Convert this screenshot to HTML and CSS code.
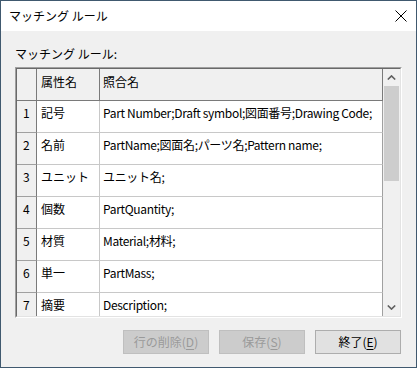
FILE: index.html
```html
<!DOCTYPE html>
<html lang="ja">
<head>
<meta charset="utf-8">
<title>マッチング ルール</title>
<link rel="stylesheet" href="styles.css">
</head>
<body>
<div class="window">
  <div class="titlebar">
    <span class="title">マッチング ルール</span>
    <svg class="close" width="12" height="12" viewBox="0 0 12 12"><path d="M0.5 0.5L11.5 11.5M11.5 0.5L0.5 11.5" stroke="#000" stroke-width="1" fill="none"/></svg>
  </div>
  <div class="content">
    <div class="label">マッチング ルール:</div>
    <div class="frame">
      <div class="frame-inner">
        <div class="grid">
          <div class="row head">
            <div class="cell rh"></div>
            <div class="cell c2">属性名</div>
            <div class="cell c3">照合名</div>
          </div>
          <div class="row">
            <div class="cell rh">1</div>
            <div class="cell c2">記号</div>
            <div class="cell c3">Part Number;Draft symbol;図面番号;Drawing Code;</div>
          </div>
          <div class="row">
            <div class="cell rh">2</div>
            <div class="cell c2">名前</div>
            <div class="cell c3">PartName;図面名;パーツ名;Pattern name;</div>
          </div>
          <div class="row">
            <div class="cell rh">3</div>
            <div class="cell c2">ユニット</div>
            <div class="cell c3">ユニット名;</div>
          </div>
          <div class="row">
            <div class="cell rh">4</div>
            <div class="cell c2">個数</div>
            <div class="cell c3">PartQuantity;</div>
          </div>
          <div class="row">
            <div class="cell rh">5</div>
            <div class="cell c2">材質</div>
            <div class="cell c3">Material;材料;</div>
          </div>
          <div class="row">
            <div class="cell rh">6</div>
            <div class="cell c2">単一</div>
            <div class="cell c3">PartMass;</div>
          </div>
          <div class="row">
            <div class="cell rh">7</div>
            <div class="cell c2">摘要</div>
            <div class="cell c3">Description;</div>
          </div>
        </div>
        <div class="scrollbar">
          <div class="sb-btn"><svg width="9" height="5" viewBox="0 0 9 5"><path d="M0.8 4.5L4.5 0.9L8.2 4.5" stroke="#606060" stroke-width="1.6" fill="none"/></svg></div>
          <div class="sb-track"><div class="sb-thumb"></div></div>
          <div class="sb-btn"><svg width="9" height="5" viewBox="0 0 9 5"><path d="M0.8 0.5L4.5 4.1L8.2 0.5" stroke="#606060" stroke-width="1.6" fill="none"/></svg></div>
        </div>
      </div>
    </div>
    <div class="buttons">
      <button class="btn disabled">行の削除(<u>D</u>)</button>
      <button class="btn disabled">保存(<u>S</u>)</button>
      <button class="btn">終了(<u>E</u>)</button>
    </div>
  </div>
</div>
</body>
</html>
```
FILE: styles.css
```css
html, body {
  margin: 0;
  padding: 0;
}
body {
  font-family: "Noto Sans CJK JP", "Noto Sans", sans-serif;
  font-size: 12px;
  color: #000;
}
.window {
  width: 417px;
  height: 368px;
  box-sizing: border-box;
  border: 1px solid #40596f;
  background: #f0f0f0;
  display: flex;
  flex-direction: column;
}
.titlebar {
  height: 30px;
  background: #fff;
  display: flex;
  align-items: center;
  justify-content: space-between;
  padding: 0 9px 0 8px;
}
.title {
  line-height: 16px;
  margin-top: -1px;
}
.close {
  display: block;
  margin-top: -1px;
}
.content {
  padding: 0 14px;
  display: flex;
  flex-direction: column;
}
.label {
  line-height: 15px;
  margin-top: 15px;
  height: 15px;
}
.frame {
  margin-top: 6px;
  border-top: 1px solid #a0a0a0;
  border-left: 1px solid #a0a0a0;
  border-right: 1px solid #fff;
  border-bottom: 1px solid #fff;
}
.frame-inner {
  border-top: 1px solid #696969;
  border-left: 1px solid #696969;
  border-right: 1px solid #e3e3e3;
  border-bottom: 1px solid #e3e3e3;
  height: 247px;
  display: flex;
  overflow: hidden;
  background: #fff;
}
.grid {
  width: 366px;
  display: flex;
  flex-direction: column;
}
.row {
  display: flex;
  height: 32px;
  flex: none;
}
.cell {
  box-sizing: border-box;
  height: 100%;
  line-height: 16px;
  padding-top: 4px;
  border-right: 1px solid #c8c8c8;
  border-bottom: 1px solid #c8c8c8;
  white-space: nowrap;
  overflow: hidden;
}
.rh {
  width: 20px;
  padding-left: 6px;
  background: #f0f0f0;
  border-right-color: #7a7a7a;
  border-bottom-color: #a0a0a0;
}
.c2 {
  width: 63px;
  padding-left: 4px;
}
.c3 {
  width: 283px;
  padding-left: 3px;
  border-right-color: #a0a0a0;
  letter-spacing: -0.32px;
}
.head .cell {
  background: #f0f0f0;
  border-bottom-color: #7a7a7a;
  border-right-color: #7a7a7a;
  padding-top: 5px;
}
.head .c3 {
  letter-spacing: 0;
}
.scrollbar {
  width: 17px;
  background: #f0f0f0;
  display: flex;
  flex-direction: column;
}
.sb-btn {
  height: 17px;
  display: flex;
  align-items: center;
  justify-content: center;
  flex: none;
}
.sb-track {
  flex: 1;
  padding: 0 1px;
}
.sb-thumb {
  height: 95px;
  background: #cdcdcd;
}
.buttons {
  display: flex;
  justify-content: flex-end;
  gap: 10px;
  margin-top: 12px;
  margin-right: 1px;
}
.btn {
  width: 86px;
  height: 24px;
  box-sizing: border-box;
  font-family: "Noto Sans CJK JP", "Noto Sans", sans-serif;
  font-size: 12px;
  line-height: 16px;
  padding: 0;
  background: #e1e1e1;
  border: 1px solid #adadad;
  color: #000;
}
.btn.disabled {
  background: #cccccc;
  border-color: #bfbfbf;
  color: #9a9a9a;
}
.btn u {
  text-underline-offset: 2px;
}
```
